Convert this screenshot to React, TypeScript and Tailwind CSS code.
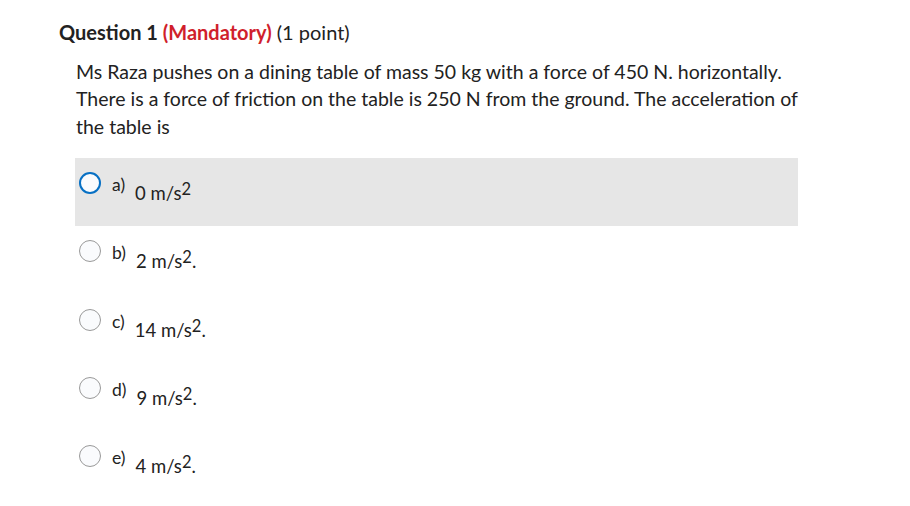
import React from "react";

const options = [
  { l: "a)", t: "0 m/s", dot: false, sel: true },
  { l: "b)", t: "2 m/s", dot: true, sel: false },
  { l: "c)", t: "14 m/s", dot: true, sel: false },
  { l: "d)", t: "9 m/s", dot: true, sel: false },
  { l: "e)", t: "4 m/s", dot: true, sel: false },
];

export default function App() {
  return (
    <div className="w-[910px] h-[506px] bg-white text-[#2d3b45]" style={{ fontFamily: "Lato, 'Noto Sans', sans-serif" }}>
      <div className="pl-[59px] pt-[19px]">
        <h2 className="text-[20px] leading-[26px] text-[#222]">
          <span className="font-bold">Question 1 </span>
          <span className="font-bold text-[#d01f2c]">(Mandatory)</span>
          <span> (1 point)</span>
        </h2>
      </div>
      <div className="pl-[76px] w-[802px] pt-[13px] text-[19.5px] leading-[27.4px] text-[#222]">
        Ms Raza pushes on a dining table of mass 50 kg with a force of 450 N. horizontally. There is a force of friction on the table is 250 N from the ground. The acceleration of the table is
      </div>
      <div className="ml-[75px] w-[723px] mt-[18px] flex flex-col">
        {options.map((o) => (
          <div key={o.l} className={`h-[68.25px] flex items-start pl-[4px] pt-[14px] ${o.sel ? "bg-[#e6e6e6]" : ""}`}>
            <div
              className={`w-[22px] h-[22px] rounded-full bg-[#fafbfd] shrink-0 ${o.sel ? "border-[2.5px] border-[#0770c4]" : "border border-[#999]"}`}
            />
            <div className="ml-[11px] text-[17.5px] leading-[20px] mt-[3px] text-[#222]">{o.l}</div>
            <div className="ml-[10px] text-[18.5px] leading-[22px] mt-[10px] text-[#222] whitespace-nowrap">
              {o.t}
              <sup className="text-[16.5px] relative top-[-5px]" style={{ verticalAlign: "baseline" }}>2</sup>
              {o.dot ? "." : ""}
            </div>
          </div>
        ))}
      </div>
    </div>
  );
}
